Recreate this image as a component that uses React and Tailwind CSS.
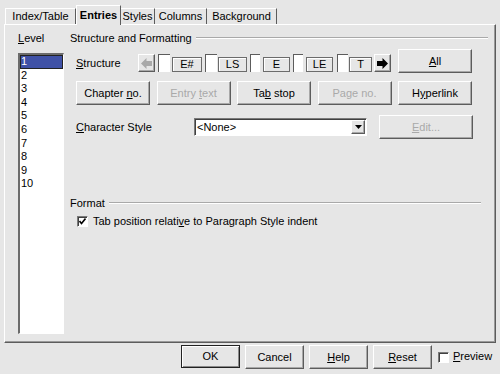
import React from "react";

const raised =
    "border border-t-white border-l-white border-r-[#5c5c5c] border-b-[#5c5c5c] shadow-[inset_-1px_-1px_0_#a8a8a8]";
const sunken =
    "border border-t-[#7a7a7a] border-l-[#7a7a7a] border-r-white border-b-white shadow-[inset_1px_1px_0_#404040]";

function Btn({ children, className = "", disabled = false }) {
    return (
        <div
            className={`flex items-center justify-center h-[24px] bg-[#e6e6e6] ${raised} ${disabled ? "text-[#a9a9a9]" : "text-black"} ${className}`}
        >
            {children}
        </div>
    );
}

function Tab({ children, active = false, className = "" }) {
    if (active) {
        return (
            <div
                className={`relative z-10 -mb-px flex items-center justify-center h-[20px] bg-[#e6e6e6] border-t border-l border-t-white border-l-white border-r border-r-[#5c5c5c] font-bold ${className}`}
            >
                {children}
            </div>
        );
    }
    return (
        <div
            className={`flex items-center justify-center h-[16px] border-t border-t-white border-r border-r-[#5c5c5c] ${className}`}
        >
            {children}
        </div>
    );
}

function Check({ checked = false }) {
    return (
        <span className={`flex items-center justify-center w-[11px] h-[11px] bg-white ${sunken}`}>
            {checked && (
                <svg width="7" height="7" viewBox="0 0 7 7">
                    <path d="M0.5 3 L2.5 5.5 L6.5 0.5" stroke="#000" strokeWidth="1.6" fill="none" />
                </svg>
            )}
        </span>
    );
}

function Field({ className = "" }) {
    return <div className={`h-[18px] bg-white border-l border-t border-l-[#5c5c5c] border-t-[#5c5c5c] ${className}`} />;
}

function Token({ children, className = "" }) {
    return (
        <div
            className={`flex items-center justify-center h-[15px] mb-[1px] border border-[#6b6b6b] shadow-[inset_1px_1px_0_#fff] ${className}`}
        >
            {children}
        </div>
    );
}

function Arrow({ dir, color }) {
    return (
        <div className={`flex items-center justify-center h-[18px] w-[17px] ${raised}`}>
            <svg width="11" height="11" viewBox="0 0 11 11">
                {dir === "left" ? (
                    <polygon points="0,5.5 5.5,0 5.5,3 11,3 11,8 5.5,8 5.5,11" fill={color} />
                ) : (
                    <polygon points="11,5.5 5.5,0 5.5,3 0,3 0,8 5.5,8 5.5,11" fill={color} />
                )}
            </svg>
        </div>
    );
}

export default function App() {
    const levels = ["1", "2", "3", "4", "5", "6", "7", "8", "9", "10"];

    return (
        <div className="w-[500px] h-[374px] bg-[#e6e6e6] text-[11px] text-black font-['Liberation_Sans',Arial,sans-serif] overflow-hidden">
            {/* tabs */}
            <div className="flex items-end h-[24px] pl-[5px]">
                <Tab className="w-[71px] border-l border-l-white">Index/Table</Tab>
                <Tab active className="w-[45px]">Entries</Tab>
                <Tab className="w-[34px]">Styles</Tab>
                <Tab className="w-[52px]">Columns</Tab>
                <Tab className="w-[70px]">Background</Tab>
            </div>

            {/* panel */}
            <div className="mx-[4px] h-[319px] border border-t-white border-l-white border-r-[#5c5c5c] border-b-[#5c5c5c] shadow-[inset_-1px_-1px_0_#9a9a9a] flex pl-[13px] pt-[6px]">
                {/* level column */}
                <div className="w-[46px] flex flex-col">
                    <div className="h-[14px] leading-[14px]">
                        <u>L</u>evel
                    </div>
                    <div className="mt-[8px] h-[281px] bg-white border-l-2 border-t-2 border-l-[#6b6b6b] border-t-[#6b6b6b] border-r border-b border-r-white border-b-white">
                        {levels.map((l, i) => (
                            <div
                                key={l}
                                className={`h-[13.6px] leading-[13.6px] pl-[1px] ${i === 0 ? "bg-[#3f51a6] text-white outline outline-1 outline-[#222] -outline-offset-1" : ""}`}
                            >
                                {l}
                            </div>
                        ))}
                    </div>
                </div>

                {/* right column */}
                <div className="ml-[6px] w-[418px] flex flex-col">
                    <div className="flex items-center h-[14px]">
                        <span>Structure and Formatting</span>
                        <div className="ml-[4px] flex-1 h-[2px] border-t border-t-[#a9a9a9] border-b border-b-white" />
                    </div>

                    {/* structure row */}
                    <div className="mt-[5px] flex items-end h-[23px] pl-[6px]">
                        <div className="w-[62px] self-center mt-[3px]">
                            <u>S</u>tructure
                        </div>
                        <div className="mb-[1px]">
                            <Arrow dir="left" color="#a9a9a9" />
                        </div>
                        <Field className="ml-[3px] w-[12px] mb-[1px]" />
                        <Token className="ml-[2px] w-[30px]">E#</Token>
                        <Field className="ml-[3px] w-[12px] mb-[1px]" />
                        <Token className="ml-[1px] w-[29px]">LS</Token>
                        <Field className="ml-[3px] w-[10px] mb-[1px]" />
                        <Token className="ml-[3px] w-[27px]">E</Token>
                        <Field className="ml-[3px] w-[10px] mb-[1px]" />
                        <Token className="ml-[3px] w-[27px]">LE</Token>
                        <Field className="ml-[4px] w-[11px] mb-[1px]" />
                        <Token className="ml-[1px] w-[23px]">T</Token>
                        <div className="ml-[2px] mb-[1px]">
                            <Arrow dir="right" color="#000" />
                        </div>
                        <Btn className="ml-[7px] w-[74px] h-[23px]">
                            <u>A</u>ll
                        </Btn>
                    </div>

                    {/* button row */}
                    <div className="mt-[8px] flex gap-[6.5px] pl-[6px]">
                        <Btn className="w-[74px]">
                            Chapter&nbsp;<u>n</u>o.
                        </Btn>
                        <Btn disabled className="w-[74px]">
                            Entry&nbsp;<u>t</u>ext
                        </Btn>
                        <Btn className="w-[74px]">
                            Ta<u>b</u>&nbsp;stop
                        </Btn>
                        <Btn disabled className="w-[74px]">
                            Page no.
                        </Btn>
                        <Btn className="w-[74px]">
                            H<u>y</u>perlink
                        </Btn>
                    </div>

                    {/* character style row */}
                    <div className="mt-[10px] flex items-center pl-[6px]">
                        <div className="w-[118px]">
                            <u>C</u>haracter Style
                        </div>
                        <div className={`flex items-center w-[173px] h-[18px] bg-white ${sunken}`}>
                            <span className="flex-1 pl-[2px]">&lt;None&gt;</span>
                            <div className={`flex items-center justify-center w-[14px] h-[14px] mr-[1px] bg-[#e6e6e6] ${raised}`}>
                                <svg width="7" height="4" viewBox="0 0 7 4">
                                    <polygon points="0,0 7,0 3.5,4" fill="#000" />
                                </svg>
                            </div>
                        </div>
                        <Btn disabled className="ml-[12px] w-[94px]">
                            <u>E</u>dit...
                        </Btn>
                    </div>

                    {/* format */}
                    <div className="mt-[57px] flex items-center h-[14px] mr-[7px]">
                        <span>Format</span>
                        <div className="ml-[4px] flex-1 h-[2px] border-t border-t-[#a9a9a9] border-b border-b-white" />
                    </div>
                    <div className="mt-[4px] flex items-center h-[14px] pl-[7px] gap-[5px]">
                        <Check checked />
                        <span>
                            Tab position relati<u>v</u>e to Paragraph Style indent
                        </span>
                    </div>
                </div>
            </div>

            {/* bottom buttons */}
            <div className="mt-[2px] flex items-start pl-[181px] gap-[5px]">
                <div className="flex items-center justify-center w-[59px] h-[23px] border border-[#222] shadow-[inset_1px_1px_0_#fff,inset_-1px_-1px_0_#8a8a8a]">
                    OK
                </div>
                <Btn className="w-[59px] h-[23px]">Cancel</Btn>
                <Btn className="w-[59px] h-[23px]">
                    <u>H</u>elp
                </Btn>
                <Btn className="w-[59px] h-[23px]">
                    <u>R</u>eset
                </Btn>
                <div className="ml-[1px] mt-[5px] flex items-center gap-[4px]">
                    <Check />
                    <span className="-mt-[2px]">
                        <u>P</u>review
                    </span>
                </div>
            </div>
        </div>
    );
}
